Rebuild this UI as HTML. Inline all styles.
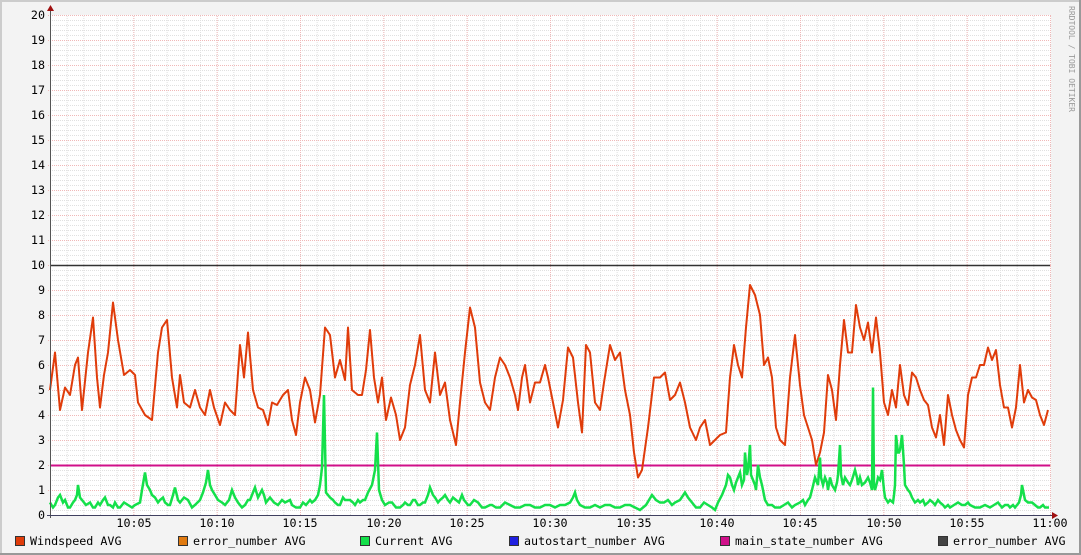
<!DOCTYPE html>
<html><head><meta charset="utf-8"><style>
html,body{margin:0;padding:0}
body{width:1081px;height:555px;overflow:hidden;background:#f3f3f3}
svg{display:block}
text{font-family:"DejaVu Sans Mono","Liberation Mono",monospace;font-size:11.7px;fill:#000}
</style></head><body>
<svg width="1081" height="555" viewBox="0 0 1081 555" xmlns="http://www.w3.org/2000/svg">
<defs>
<pattern id="minorV" x="50" y="0" width="16.667" height="555" patternUnits="userSpaceOnUse">
<line x1="0.5" y1="0" x2="0.5" y2="555" stroke="#e0e0e0" stroke-dasharray="1,1" shape-rendering="crispEdges"/>
</pattern>
<pattern id="minorH" x="0" y="15" width="1081" height="5" patternUnits="userSpaceOnUse">
<line x1="0" y1="0.5" x2="1081" y2="0.5" stroke="#e0e0e0" stroke-dasharray="1,1" shape-rendering="crispEdges"/>
</pattern>
<pattern id="majorV" x="50" y="0" width="83.333" height="555" patternUnits="userSpaceOnUse">
<line x1="0.5" y1="0" x2="0.5" y2="555" stroke="#f0b8b8" stroke-dasharray="1,1" shape-rendering="crispEdges"/>
</pattern>
<pattern id="majorH" x="0" y="15" width="1081" height="25" patternUnits="userSpaceOnUse">
<line x1="0" y1="0.5" x2="1081" y2="0.5" stroke="#f0b8b8" stroke-dasharray="1,1" shape-rendering="crispEdges"/>
</pattern>
</defs>
<rect x="0" y="0" width="1081" height="555" fill="#f3f3f3"/>
<rect x="0" y="0" width="1081" height="2" fill="#ccc"/>
<rect x="0" y="0" width="2" height="555" fill="#ccc"/>
<rect x="1079" y="0" width="2" height="555" fill="#999"/>
<rect x="0" y="553" width="1081" height="2" fill="#999"/>
<rect x="50" y="15" width="1001" height="500" fill="#fff"/>
<rect x="50" y="15" width="1001" height="500" fill="url(#minorV)"/>
<rect x="50" y="15" width="1001" height="500" fill="url(#minorH)"/>
<rect x="50" y="15" width="1001" height="501" fill="url(#majorV)"/>
<rect x="47" y="15" width="1004" height="500" fill="url(#majorH)"/>

<line x1="50" y1="265.5" x2="1050" y2="265.5" stroke="#333" stroke-width="1.5"/>
<line x1="50" y1="465.5" x2="1050" y2="465.5" stroke="#d0108a" stroke-width="2"/>

<g transform="translate(0,515) scale(1,-25)">
<polyline fill="none" stroke="#e03c0a" stroke-width="2" vector-effect="non-scaling-stroke" stroke-linejoin="round" points="50,5 55,6.5 60,4.2 65,5.1 70,4.8 75,6.0 78,6.3 82,4.2 88,6.5 93,7.9 97,5.5 100,4.3 104,5.6 108,6.5 113,8.5 118,7 124,5.6 130,5.8 135,5.6 138,4.5 145,4.0 152,3.8 158,6.5 162,7.5 167,7.8 172,5.5 177,4.3 180,5.6 184,4.5 190,4.3 195,5 200,4.3 205,4.0 210,5.0 214,4.3 220,3.6 225,4.5 230,4.2 235,4.0 240,6.8 244,5.5 248,7.3 253,5 258,4.3 263,4.2 268,3.6 272,4.5 277,4.4 283,4.8 288,5.0 292,3.8 296,3.2 300,4.5 305,5.5 310,5.0 315,3.7 320,4.8 325,7.5 330,7.2 335,5.5 340,6.2 345,5.4 348,7.5 352,5.0 358,4.8 362,4.8 366,5.8 370,7.4 374,5.5 378,4.5 382,5.5 386,3.8 391,4.7 396,4.0 400,3.0 405,3.5 410,5.2 415,6.0 420,7.2 425,5.0 430,4.5 435,6.5 440,4.8 445,5.3 450,3.8 456,2.8 460,4.5 465,6.5 470,8.3 475,7.5 480,5.3 485,4.5 490,4.2 495,5.5 500,6.3 505,6.0 510,5.5 515,4.8 518,4.2 522,5.5 525,6.0 530,4.5 535,5.3 540,5.3 545,6.0 548,5.5 553,4.5 558,3.5 563,4.6 568,6.7 573,6.3 578,4.5 582,3.3 586,6.8 590,6.5 595,4.5 600,4.2 604,5.3 610,6.8 615,6.2 620,6.5 625,5.0 630,4.0 634,2.5 638,1.5 642,1.8 648,3.5 654,5.5 660,5.5 665,5.7 670,4.6 675,4.8 680,5.3 685,4.5 690,3.5 696,3.0 700,3.5 705,3.8 710,2.8 715,3.0 720,3.2 726,3.3 730,5.5 734,6.8 738,6.0 742,5.5 746,7.5 750,9.2 755,8.8 760,8.0 764,6.0 768,6.3 772,5.5 776,3.5 780,3.0 785,2.8 790,5.5 795,7.2 800,5.2 804,4.0 808,3.5 812,3.0 816,2.0 820,2.5 824,3.3 828,5.6 832,5.0 836,3.8 840,6.0 844,7.8 848,6.5 852,6.5 856,8.4 860,7.5 864,7.0 868,7.7 872,6.5 876,7.9 880,6.5 884,4.5 888,4.0 892,5.0 896,4.3 900,6.0 904,4.8 908,4.4 912,5.7 916,5.5 920,5.0 924,4.6 928,4.4 932,3.5 936,3.1 940,4.0 944,2.8 948,4.8 952,4.0 956,3.4 960,3.0 964,2.7 968,4.8 972,5.5 976,5.5 980,6.0 984,6.0 988,6.7 992,6.2 996,6.6 1000,5.2 1004,4.3 1008,4.3 1012,3.5 1016,4.3 1020,6.0 1024,4.5 1028,5.0 1032,4.7 1036,4.6 1040,4.0 1044,3.6 1048,4.2"/>
<polyline fill="none" stroke="#14e04a" stroke-width="2.5" vector-effect="non-scaling-stroke" points="50,0.5 53,0.3 55,0.4 58,0.7 60,0.8 63,0.5 65,0.6 68,0.3 70,0.3 73,0.5 75,0.6 77,0.8 78,1.2 80,0.7 82,0.6 86,0.4 90,0.5 93,0.3 95,0.3 98,0.5 100,0.4 103,0.6 105,0.7 108,0.4 110,0.4 113,0.3 115,0.5 118,0.3 120,0.3 124,0.5 128,0.4 132,0.3 135,0.4 140,0.5 142,1.0 145,1.7 147,1.2 150,1.0 152,0.8 155,0.7 158,0.5 160,0.6 163,0.7 165,0.5 168,0.4 170,0.4 173,0.8 175,1.1 178,0.6 180,0.5 184,0.7 188,0.6 192,0.3 195,0.4 200,0.6 203,0.9 206,1.3 208,1.8 210,1.2 212,1.0 215,0.8 218,0.6 222,0.5 225,0.4 229,0.6 232,1.0 235,0.7 238,0.5 242,0.3 245,0.4 248,0.6 250,0.6 253,0.9 255,1.1 258,0.7 262,1.0 264,0.8 266,0.5 268,0.6 270,0.7 274,0.5 278,0.4 282,0.6 285,0.5 290,0.6 292,0.4 296,0.3 300,0.3 303,0.5 306,0.4 310,0.6 312,0.5 315,0.6 318,0.8 320,1.2 322,1.9 324,4.8 326,0.9 330,0.7 333,0.6 335,0.5 338,0.4 340,0.4 343,0.7 345,0.6 348,0.6 350,0.6 353,0.5 355,0.4 358,0.6 360,0.5 363,0.6 365,0.6 368,0.9 372,1.2 375,1.8 377,3.3 379,1.0 382,0.6 385,0.4 389,0.5 392,0.5 396,0.3 400,0.3 403,0.4 405,0.5 408,0.4 410,0.4 413,0.6 415,0.6 418,0.4 420,0.4 423,0.5 425,0.5 428,0.8 430,1.1 433,0.8 435,0.7 438,0.5 440,0.6 443,0.7 445,0.8 448,0.6 450,0.5 453,0.7 456,0.6 459,0.5 462,0.8 464,0.6 466,0.5 468,0.4 470,0.4 474,0.6 478,0.5 482,0.3 485,0.3 490,0.4 492,0.4 496,0.3 500,0.3 505,0.5 510,0.4 515,0.3 520,0.3 525,0.4 530,0.4 535,0.3 540,0.3 545,0.4 550,0.4 555,0.3 560,0.4 565,0.4 570,0.5 573,0.7 575,0.9 577,0.6 580,0.4 585,0.3 590,0.3 595,0.4 600,0.3 605,0.4 610,0.4 615,0.3 620,0.3 625,0.4 630,0.4 635,0.3 640,0.2 643,0.3 646,0.4 649,0.6 652,0.8 656,0.6 660,0.5 664,0.5 668,0.6 672,0.4 675,0.5 680,0.6 685,0.9 688,0.7 692,0.5 696,0.3 700,0.3 704,0.5 708,0.4 712,0.3 715,0.2 718,0.5 722,0.8 724,1.0 726,1.2 728,1.6 730,1.5 732,1.2 734,1.0 736,1.3 738,1.5 740,1.7 742,1.2 744,1.4 745,2.5 747,1.6 748,1.8 750,2.8 751,1.6 753,1.4 755,1.2 756,1.0 758,2.0 760,1.5 762,1.2 764,0.8 765,0.6 768,0.4 772,0.4 775,0.3 780,0.3 784,0.4 788,0.5 792,0.3 795,0.4 800,0.5 803,0.6 805,0.4 808,0.6 810,0.7 812,1.0 815,1.5 817,1.3 818,1.2 820,2.3 821,1.5 823,1.2 825,1.5 827,1.3 828,1.0 830,1.5 832,1.2 835,1.0 837,1.3 838,1.6 840,2.8 841,1.6 843,1.2 845,1.5 848,1.3 850,1.2 852,1.4 855,1.8 857,1.5 858,1.2 860,1.5 862,1.2 865,1.3 868,1.5 870,1.3 872,1.0 873,5.1 874,1.2 875,1.0 877,1.3 878,1.5 880,1.4 882,1.8 884,1.0 885,0.7 888,0.5 890,0.6 893,0.5 894,0.8 895,1.2 896,3.2 898,2.5 899,2.5 900,2.6 902,3.2 904,2.0 905,1.2 908,1.0 910,0.9 912,0.7 915,0.5 918,0.6 920,0.5 923,0.6 925,0.4 928,0.5 930,0.6 933,0.5 935,0.4 938,0.6 940,0.5 943,0.4 945,0.3 948,0.4 950,0.3 954,0.4 958,0.5 962,0.4 965,0.4 968,0.5 970,0.4 975,0.3 980,0.3 985,0.4 990,0.3 994,0.4 998,0.5 1002,0.3 1005,0.4 1008,0.4 1010,0.3 1013,0.4 1015,0.3 1017,0.4 1019,0.5 1021,0.8 1022,1.2 1024,0.8 1025,0.6 1028,0.5 1032,0.5 1035,0.4 1038,0.3 1040,0.3 1043,0.4 1045,0.3 1049,0.3"/>
</g>

<line x1="50.5" y1="10" x2="50.5" y2="518" stroke="#555" stroke-width="1"/>
<polygon points="47,11 54,11 50.5,5" fill="#a01010"/>
<line x1="47" y1="515.5" x2="1053" y2="515.5" stroke="#404060" stroke-width="1"/>
<polygon points="1052,512 1052,519 1058,515.5" fill="#a01010"/>

<g text-anchor="end">
<text x="45" y="19">20</text><text x="45" y="44">19</text><text x="45" y="69">18</text><text x="45" y="94">17</text><text x="45" y="119">16</text><text x="45" y="144">15</text><text x="45" y="169">14</text><text x="45" y="194">13</text><text x="45" y="219">12</text><text x="45" y="244">11</text><text x="45" y="269">10</text><text x="45" y="294">9</text><text x="45" y="319">8</text><text x="45" y="344">7</text><text x="45" y="369">6</text><text x="45" y="394">5</text><text x="45" y="419">4</text><text x="45" y="444">3</text><text x="45" y="469">2</text><text x="45" y="494">1</text><text x="45" y="519">0</text>
</g>
<g text-anchor="middle">
<text x="134" y="527">10:05</text><text x="217" y="527">10:10</text><text x="300" y="527">10:15</text><text x="384" y="527">10:20</text><text x="467" y="527">10:25</text><text x="550" y="527">10:30</text><text x="634" y="527">10:35</text><text x="717" y="527">10:40</text><text x="800" y="527">10:45</text><text x="884" y="527">10:50</text><text x="967" y="527">10:55</text><text x="1050" y="527">11:00</text>
</g>

<text x="1069" y="6" transform="rotate(90 1069 6)" style="font-size:8px;fill:#999">RRDTOOL / TOBI OETIKER</text>

<g>
<rect x="15.5" y="536.5" width="9" height="9" fill="#e03c0a" stroke="#333"/>
<text x="30" y="545">Windspeed AVG</text>
<rect x="178.5" y="536.5" width="9" height="9" fill="#e07a10" stroke="#333"/>
<text x="193" y="545">error_number AVG</text>
<rect x="360.5" y="536.5" width="9" height="9" fill="#14e04a" stroke="#333"/>
<text x="375" y="545">Current AVG</text>
<rect x="509.5" y="536.5" width="9" height="9" fill="#2020e0" stroke="#333"/>
<text x="524" y="545">autostart_number AVG</text>
<rect x="720.5" y="536.5" width="9" height="9" fill="#d0108a" stroke="#333"/>
<text x="735" y="545">main_state_number AVG</text>
<rect x="938.5" y="536.5" width="9" height="9" fill="#444" stroke="#333"/>
<text x="953" y="545">error_number AVG</text>
</g>
</svg>
</body></html>
